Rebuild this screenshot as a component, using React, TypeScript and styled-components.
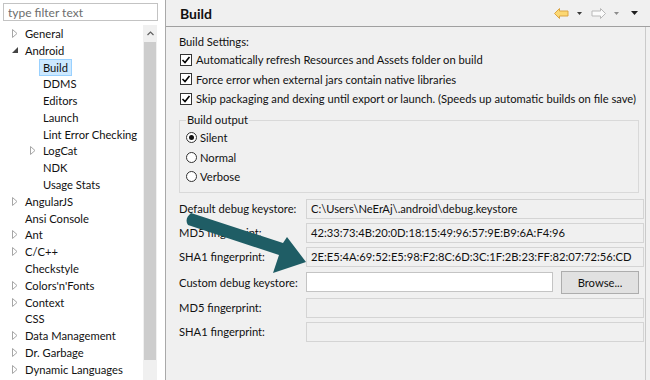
import React from "react";
import styled, { createGlobalStyle } from "styled-components";

const GlobalStyle = createGlobalStyle`
  html, body { margin: 0; padding: 0; background: #f0f0f0; }
  body {
    font-family: Lato, "Liberation Sans", sans-serif;
    font-size: 11.2px;
    color: #111;
  }
`;

interface TreeItem {
  label: string;
  level: number;
  expander?: "collapsed" | "expanded";
  selected?: boolean;
}

const treeItems: TreeItem[] = [
  { label: "General", level: 0, expander: "collapsed" },
  { label: "Android", level: 0, expander: "expanded" },
  { label: "Build", level: 1, selected: true },
  { label: "DDMS", level: 1 },
  { label: "Editors", level: 1 },
  { label: "Launch", level: 1 },
  { label: "Lint Error Checking", level: 1 },
  { label: "LogCat", level: 1, expander: "collapsed" },
  { label: "NDK", level: 1 },
  { label: "Usage Stats", level: 1 },
  { label: "AngularJS", level: 0, expander: "collapsed" },
  { label: "Ansi Console", level: 0 },
  { label: "Ant", level: 0, expander: "collapsed" },
  { label: "C/C++", level: 0, expander: "collapsed" },
  { label: "Checkstyle", level: 0 },
  { label: "Colors'n'Fonts", level: 0, expander: "collapsed" },
  { label: "Context", level: 0, expander: "collapsed" },
  { label: "CSS", level: 0 },
  { label: "Data Management", level: 0, expander: "collapsed" },
  { label: "Dr. Garbage", level: 0, expander: "collapsed" },
  { label: "Dynamic Languages", level: 0, expander: "collapsed" },
];

const Window = styled.div`
  position: relative;
  display: flex;
  width: 650px;
  height: 380px;
  overflow: hidden;
  background: #f0f0f0;
`;

// ---- left: filter + tree
const Sidebar = styled.aside`
  width: 165px;
  flex: none;
  display: flex;
  flex-direction: column;
  background: #fff;
  border-right: 1px solid #a9a9a9;
`;

const FilterInput = styled.input`
  margin: 3px 0 0 3px;
  width: 155px;
  height: 18px;
  box-sizing: border-box;
  border: 1px solid #c3c3c3;
  padding: 0 4px;
  font: inherit;
  font-size: 12px;
  color: #111;
  outline: none;
  &::placeholder { color: #6d6d6d; }
`;

const TreeArea = styled.div`
  flex: 1;
  display: flex;
  margin-top: 4px;
  padding-right: 8px;
  min-height: 0;
`;

const TreeList = styled.ul`
  flex: 1;
  margin: 0;
  padding: 0;
  list-style: none;
  overflow: hidden;
`;

const TreeRow = styled.li<{ $level: number }>`
  display: flex;
  align-items: center;
  height: 16.8px;
  padding-left: ${(p) => 12 + p.$level * 18}px;
  white-space: nowrap;
`;

const Expander = styled.span`
  width: 13px;
  flex: none;
  display: flex;
  align-items: center;
`;

const TreeLabel = styled.span<{ $selected?: boolean }>`
  line-height: 15px;
  padding: 0 3px;
  margin-left: -4px;
  border: 1px solid ${(p) => (p.$selected ? "#99d1ff" : "transparent")};
  background: ${(p) => (p.$selected ? "#cce8ff" : "transparent")};
`;

const Scrollbar = styled.div`
  width: 14px;
  flex: none;
  display: flex;
  flex-direction: column;
  background: #f0f0f0;
`;

const ScrollButton = styled.div`
  height: 17px;
  display: flex;
  align-items: center;
  justify-content: center;
`;

const ScrollThumb = styled.div`
  height: 318px;
  margin: 0 1px;
  background: #cdcdcd;
`;

// ---- right: preference page
const Page = styled.main`
  flex: 1;
  min-width: 0;
  display: flex;
  flex-direction: column;
`;

const PageHeader = styled.header`
  height: 26px;
  flex: none;
  display: flex;
  align-items: center;
  justify-content: space-between;
  padding: 0 12px 0 14px;
  border-bottom: 1px solid #a0a0a0;
`;

const PageTitle = styled.h1`
  margin: 0;
  font-size: 14px;
  font-weight: 700;
  color: #111;
`;

const NavBar = styled.div`
  display: flex;
  align-items: center;
`;

const NavIcon = styled.svg<{ $gap: number }>`
  display: block;
  margin-right: ${(p) => p.$gap}px;
`;

const PageBody = styled.div`
  flex: 1;
  display: flex;
  flex-direction: column;
  padding: 7px 1px 0 13px;
  margin-right: 4px;
  border-right: 1px solid #cacaca;
`;

const SectionLabel = styled.div`
  line-height: 16px;
`;

const OptionRow = styled.label`
  display: flex;
  align-items: center;
  height: 19.5px;
  padding-left: 1px;
  gap: 4px;
  white-space: nowrap;
`;

const CheckBox = styled.span`
  width: 12px;
  height: 12px;
  box-sizing: border-box;
  flex: none;
  border: 1px solid #333;
  background: #fff;
  display: flex;
  align-items: center;
  justify-content: center;
`;

const GroupBox = styled.fieldset`
  margin: 3.5px 5px 0 0;
  padding: 0 6px 5px;
  border: 1px solid #d9d9d9;
  min-inline-size: 0;
`;

const GroupLegend = styled.legend`
  padding: 0 1px;
  line-height: 16px;
`;

const RadioRow = styled.label`
  display: flex;
  align-items: center;
  height: 19.5px;
  gap: 3px;
`;

const RadioCircle = styled.span<{ $checked?: boolean }>`
  width: 11px;
  height: 11px;
  box-sizing: border-box;
  flex: none;
  border-radius: 50%;
  border: 1px solid #333;
  background: #fff;
  display: flex;
  align-items: center;
  justify-content: center;
  &::after {
    content: "";
    width: 5px;
    height: 5px;
    border-radius: 50%;
    background: ${(p) => (p.$checked ? "#111" : "transparent")};
  }
`;

const FieldGrid = styled.div`
  display: grid;
  grid-template-columns: 127px 1fr;
  row-gap: 4px;
  align-items: center;
  margin-top: 6px;
`;

const FieldLabel = styled.span`
  white-space: nowrap;
`;

const TextField = styled.div<{ $editable?: boolean }>`
  height: 20px;
  box-sizing: border-box;
  padding: 0 4px;
  line-height: 18px;
  border: 1px solid ${(p) => (p.$editable ? "#c4c4c4" : "#d4d4d4")};
  background: ${(p) => (p.$editable ? "#fff" : "#f0f0f0")};
  white-space: nowrap;
  overflow: hidden;
  flex: 1;
`;

const FieldWithButton = styled.div`
  display: flex;
  align-items: center;
  gap: 8px;
  padding-right: 5px;
`;

const PushButton = styled.button`
  width: 78px;
  height: 23px;
  box-sizing: border-box;
  border: 1px solid #adadad;
  background: #e1e1e1;
  font: inherit;
  color: #111;
  padding: 0;
`;

const Callout = styled.svg`
  position: absolute;
  left: 0;
  top: 0;
  pointer-events: none;
`;

function Check() {
  return (
    <CheckBox>
      <svg width="10" height="10" viewBox="0 0 10 10">
        <polyline points="1.5,5 4,7.5 8.5,2" fill="none" stroke="#000" strokeWidth="1.6" />
      </svg>
    </CheckBox>
  );
}

function TreeExpander({ kind }: { kind?: "collapsed" | "expanded" }) {
  return (
    <Expander>
      {kind === "collapsed" && (
        <svg width="6" height="9" viewBox="0 0 6 9">
          <polygon points="0.5,0.5 5,4.5 0.5,8.5" fill="none" stroke="#a6a6a6" />
        </svg>
      )}
      {kind === "expanded" && (
        <svg width="6" height="6" viewBox="0 0 6 6">
          <polygon points="6,0 6,6 0,6" fill="#444" />
        </svg>
      )}
    </Expander>
  );
}

const fields: { label: string; value: string }[] = [
  { label: "Default debug keystore:", value: "C:\\Users\\NeErAj\\.android\\debug.keystore" },
  { label: "MD5 fingerprint:", value: "42:33:73:4B:20:0D:18:15:49:96:57:9E:B9:6A:F4:96" },
  { label: "SHA1 fingerprint:", value: "2E:E5:4A:69:52:E5:98:F2:8C:6D:3C:1F:2B:23:FF:82:07:72:56:CD" },
];

export default function App() {
  return (
    <Window>
      <GlobalStyle />
      <Sidebar>
        <FilterInput placeholder="type filter text" />
        <TreeArea>
          <TreeList>
            {treeItems.map((item) => (
              <TreeRow key={item.label} $level={item.level}>
                <TreeExpander kind={item.expander} />
                <TreeLabel $selected={item.selected}>{item.label}</TreeLabel>
              </TreeRow>
            ))}
          </TreeList>
          <Scrollbar>
            <ScrollButton>
              <svg width="7" height="5" viewBox="0 0 7 5">
                <polyline points="0.5,4 3.5,1 6.5,4" fill="none" stroke="#606060" strokeWidth="1.2" />
              </svg>
            </ScrollButton>
            <ScrollThumb />
          </Scrollbar>
        </TreeArea>
      </Sidebar>

      <Page>
        <PageHeader>
          <PageTitle>Build</PageTitle>
          <NavBar>
            <NavIcon $gap={8} width="15" height="11" viewBox="0 0 15 11">
              <polygon points="0.5,5.5 5.5,0.5 5.5,3 14,3 14,8 5.5,8 5.5,10.5" fill="#fcd873" stroke="#dba544" />
            </NavIcon>
            <NavIcon $gap={9} width="5" height="3" viewBox="0 0 5 3">
              <polygon points="0,0 5,0 2.5,3" fill="#3a3a3a" />
            </NavIcon>
            <NavIcon $gap={8} width="15" height="11" viewBox="0 0 15 11">
              <polygon points="14.5,5.5 9.5,0.5 9.5,3 1,3 1,8 9.5,8 9.5,10.5" fill="#fbfbfb" stroke="#b9b9b9" />
            </NavIcon>
            <NavIcon $gap={12} width="5" height="3" viewBox="0 0 5 3">
              <polygon points="0,0 5,0 2.5,3" fill="#8c8c8c" />
            </NavIcon>
            <NavIcon $gap={0} width="7" height="4" viewBox="0 0 7 4">
              <polygon points="0,0 7,0 3.5,4" fill="#1e1e1e" />
            </NavIcon>
          </NavBar>
        </PageHeader>

        <PageBody>
          <SectionLabel>Build Settings:</SectionLabel>
          <OptionRow><Check />Automatically refresh Resources and Assets folder on build</OptionRow>
          <OptionRow><Check />Force error when external jars contain native libraries</OptionRow>
          <OptionRow><Check />Skip packaging and dexing until export or launch. (Speeds up automatic builds on file save)</OptionRow>

          <GroupBox>
            <GroupLegend>Build output</GroupLegend>
            <RadioRow><RadioCircle $checked />Silent</RadioRow>
            <RadioRow><RadioCircle />Normal</RadioRow>
            <RadioRow><RadioCircle />Verbose</RadioRow>
          </GroupBox>

          <FieldGrid>
            {fields.map((f) => (
              <React.Fragment key={f.label}>
                <FieldLabel>{f.label}</FieldLabel>
                <TextField>{f.value}</TextField>
              </React.Fragment>
            ))}
            <FieldLabel>Custom debug keystore:</FieldLabel>
            <FieldWithButton>
              <TextField $editable />
              <PushButton type="button">Browse...</PushButton>
            </FieldWithButton>
            <FieldLabel>MD5 fingerprint:</FieldLabel>
            <TextField />
            <FieldLabel>SHA1 fingerprint:</FieldLabel>
            <TextField />
          </FieldGrid>
        </PageBody>
      </Page>

      <Callout width="650" height="380" viewBox="0 0 650 380">
        <path
          d="M191,213 L283,243 L287,237 L306,262 L273,273 L279,255 L188,225 Q184,219 191,213 Z"
          fill="#1f5d65"
        />
      </Callout>
    </Window>
  );
}
